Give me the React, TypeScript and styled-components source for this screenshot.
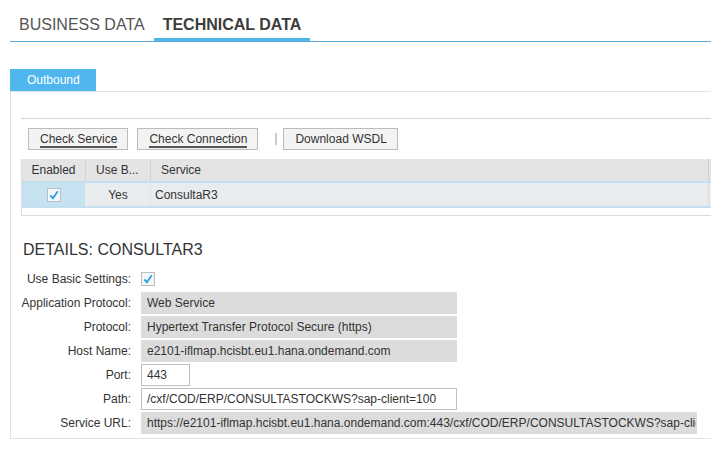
import React from 'react';
import styled, { createGlobalStyle } from 'styled-components';

const GlobalStyle = createGlobalStyle`
  html, body { margin: 0; padding: 0; overflow: hidden; background: #fff; }
  body { font-family: "Liberation Sans", Arial, sans-serif; color: #333; }
`;

const Page = styled.div`
  padding-left: 10px;
`;

const TabBar = styled.div`
  display: flex; padding-top: 16px; border-bottom: 1px solid #5ea9dc;
`;

const Tab = styled.div<{ $active?: boolean }>`
  padding: 0 ${p => (p.$active ? '9px' : '9px')} 4px;
  font-size: 16px; line-height: 18px; text-transform: uppercase;
  font-weight: ${p => (p.$active ? 'bold' : 'normal')};
  color: ${p => (p.$active ? '#3d3d3d' : '#555')};
  border-bottom: 3px solid ${p => (p.$active ? '#4db7ee' : 'transparent')};
`;

const SubTabs = styled.div`
  display: flex; margin-top: 27px;
`;

const SubTab = styled.div`
  height: 22px; line-height: 22px; padding: 0 16px 0 17px;
  background: #4fb6ee; color: #fff; font-size: 12px;
`;

const Panel = styled.div`
  border: 1px solid #e2e2e2; border-right: none;
  padding: 26px 0 4px 10px;
`;

const ServiceSection = styled.div`
  border-top: 1px solid #d4d4d4;
`;

const Toolbar = styled.div`
  display: flex; align-items: center; padding: 9px 0 9px 7px;
`;

const Button = styled.button`
  height: 22px; padding: 0 10px 0 11px; margin: 0 9px 0 0;
  border: 1px solid #bcbcbc; border-radius: 0; background: #f3f3f3;
  font-family: inherit; font-size: 12px; color: #333; cursor: pointer;
  display: flex; align-items: center;
`;

const Emphasis = styled.span`
  display: inline-block; line-height: 14px; padding-top: 1px;
  border-bottom: 2px solid #555;
`;

const Separator = styled.div`
  width: 2px; height: 12px; background: #cacaca; margin: 0 6px 0 8px;
`;

const Table = styled.div`
  height: 56px; border-left: 1px solid #dcdcdc; border-bottom: 1px solid #dcdcdc;
`;

const TableRow = styled.div<{ $header?: boolean }>`
  display: grid; grid-template-columns: 64px 65px 558px 1fr;
  height: ${p => (p.$header ? '22px' : '23px')};
  background: ${p => (p.$header ? '#e4e4e4' : '#e8ecef')};
  border-top: ${p => (p.$header ? 'none' : '2px solid #c4e0f0')};
  border-bottom: ${p => (p.$header ? 'none' : '2px solid #c4e0f0')};
`;

const Cell = styled.div<{ $align?: string; $pad?: number; $bg?: string; $sep?: string }>`
  display: flex; align-items: center; font-size: 12px; color: #333;
  justify-content: ${p => p.$align || 'flex-start'};
  padding-left: ${p => p.$pad || 0}px;
  background: ${p => p.$bg || 'transparent'};
  border-right: 1px solid ${p => p.$sep || 'transparent'};
  white-space: nowrap; overflow: hidden;
`;

const CheckBox = styled.span`
  display: inline-flex; align-items: center; justify-content: center;
  width: 12px; height: 12px; border: 1px solid #bdbdbd; background: #f4f8fb;
`;

const Heading = styled.h2`
  margin: 24px 0 8px 2px; font-size: 16px; line-height: 20px; font-weight: normal;
  color: #333;
`;

const Form = styled.div`
  display: grid; grid-template-columns: 110px auto; column-gap: 10px; row-gap: 2px;
  grid-auto-rows: 22px; align-items: center;
`;

const Label = styled.div`
  text-align: right; font-size: 12px; color: #333; white-space: nowrap;
`;

const Field = styled.div<{ $w: number; $input?: boolean }>`
  box-sizing: border-box; width: ${p => p.$w}px; height: 22px; line-height: 20px;
  padding: 0 5px; font-size: 12px; color: #333; white-space: nowrap; overflow: hidden;
  background: ${p => (p.$input ? '#fff' : '#dcdcdc')};
  border: 1px solid ${p => (p.$input ? '#bfbfbf' : '#dcdcdc')};
`;

const Check = () => (
  <CheckBox>
    <svg width="10" height="10" viewBox="0 0 10 10" fill="none">
      <path d="M1.3 5.3 L3.9 8.2 L8.8 1.2" stroke="#2f9fe4" strokeWidth="1.8" />
    </svg>
  </CheckBox>
);

const fields: { label: string; value: string; w: number; input?: boolean }[] = [
  { label: 'Application Protocol:', value: 'Web Service', w: 316 },
  { label: 'Protocol:', value: 'Hypertext Transfer Protocol Secure (https)', w: 316 },
  { label: 'Host Name:', value: 'e2101-iflmap.hcisbt.eu1.hana.ondemand.com', w: 316 },
  { label: 'Port:', value: '443', w: 49, input: true },
  { label: 'Path:', value: '/cxf/COD/ERP/CONSULTASTOCKWS?sap-client=100', w: 316, input: true },
  { label: 'Service URL:', value: 'https://e2101-iflmap.hcisbt.eu1.hana.ondemand.com:443/cxf/COD/ERP/CONSULTASTOCKWS?sap-client=100', w: 556 },
];

const App = () => (
  <Page>
    <GlobalStyle />
    <TabBar>
      <Tab>Business Data</Tab>
      <Tab $active>Technical Data</Tab>
    </TabBar>
    <SubTabs>
      <SubTab>Outbound</SubTab>
    </SubTabs>
    <Panel>
      <ServiceSection>
        <Toolbar>
          <Button><Emphasis>Check Service</Emphasis></Button>
          <Button><Emphasis>Check Connection</Emphasis></Button>
          <Separator />
          <Button>Download WSDL</Button>
        </Toolbar>
        <Table>
          <TableRow $header>
            <Cell $align="center" $sep="#d2d2d2">Enabled</Cell>
            <Cell $pad={10} $sep="#d2d2d2">Use B...</Cell>
            <Cell $pad={10} $sep="#cfcfcf">Service</Cell>
            <Cell />
          </TableRow>
          <TableRow>
            <Cell $align="center" $bg="#c6e1ef" $sep="#e8ecef"><Check /></Cell>
            <Cell $align="center" $sep="#dfe5ea">Yes</Cell>
            <Cell $pad={4} $sep="#d6dde2">ConsultaR3</Cell>
            <Cell />
          </TableRow>
        </Table>
      </ServiceSection>
      <Heading>DETAILS: CONSULTAR3</Heading>
      <Form>
        <Label>Use Basic Settings:</Label>
        <div><Check /></div>
        {fields.map(f => (
          <React.Fragment key={f.label}>
            <Label>{f.label}</Label>
            <Field $w={f.w} $input={f.input}>{f.value}</Field>
          </React.Fragment>
        ))}
      </Form>
    </Panel>
  </Page>
);

export default App;
